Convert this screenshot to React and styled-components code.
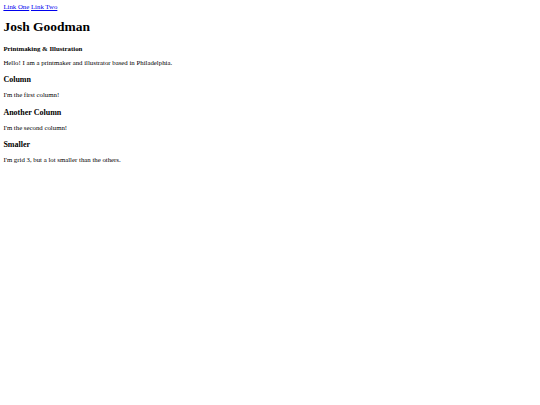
import React from 'react';
import styled, {createGlobalStyle} from 'styled-components';

const GlobalStyle = createGlobalStyle`
  body {
    margin: 3.4px;
    font-family: 'Liberation Serif', 'Times New Roman', serif;
    font-size: 6.8px;
    color: #000;
    background: #fff;
  }
`;

const Nav = styled.nav`
  display: flex;
  gap: 1.7px;
`;

const NavLink = styled.a`
  color: #0000ee;
  text-decoration: underline;
`;

const Title = styled.h1`
  font-size: 13.5px;
  margin: 8.6px 0 9.6px;
`;

const Subtitle = styled.h4`
  font-size: 6.8px;
  margin: 9.6px 0 7.2px;
`;

const Text = styled.p`
  margin: 7px 0;
`;

const Columns = styled.div`
  display: block;
`;

const Heading = styled.h3`
  font-size: 8px;
  margin: 9.4px 0 7px;
`;

const columns = [
  {title: 'Column', text: "I'm the first column!"},
  {title: 'Another Column', text: "I'm the second column!"},
  {title: 'Smaller', text: "I'm grid 3, but a lot smaller than the others."},
];

const App = () => (
  <>
    <GlobalStyle />
    <Nav>
      <NavLink href="#">Link One</NavLink>
      <NavLink href="#">Link Two</NavLink>
    </Nav>
    <header>
      <Title>Josh Goodman</Title>
      <Subtitle>Printmaking &amp; Illustration</Subtitle>
      <Text>Hello! I am a printmaker and illustrator based in Philadelphia.</Text>
    </header>
    <Columns>
      {columns.map((c) => (
        <section key={c.title}>
          <Heading>{c.title}</Heading>
          <Text>{c.text}</Text>
        </section>
      ))}
    </Columns>
  </>
);

export default App;
